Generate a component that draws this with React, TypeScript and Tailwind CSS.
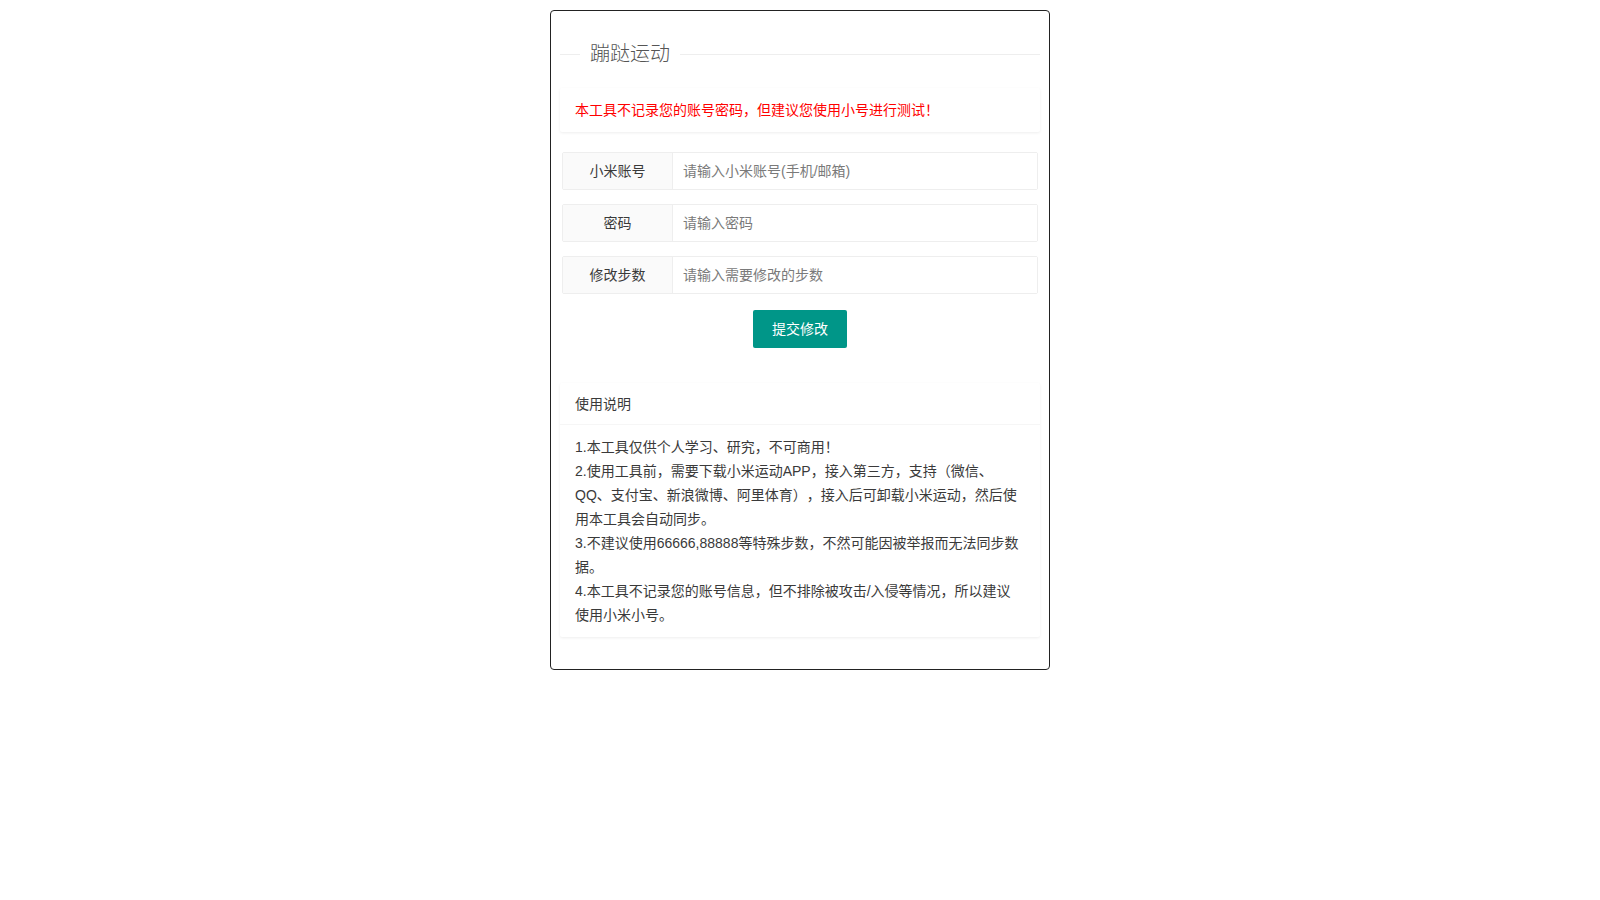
import React from "react";

const FONT = '"Liberation Sans", "Noto Sans CJK SC", sans-serif';

const fields = [
    { label: "小米账号", placeholder: "请输入小米账号(手机/邮箱)", type: "text" },
    { label: "密码", placeholder: "请输入密码", type: "password" },
    { label: "修改步数", placeholder: "请输入需要修改的步数", type: "text" },
];

const notes = [
    "1.本工具仅供个人学习、研究，不可商用！",
    "2.使用工具前，需要下载小米运动APP，接入第三方，支持（微信、QQ、支付宝、新浪微博、阿里体育），接入后可卸载小米运动，然后使用本工具会自动同步。",
    "3.不建议使用66666,88888等特殊步数，不然可能因被举报而无法同步数据。",
    "4.本工具不记录您的账号信息，但不排除被攻击/入侵等情况，所以建议使用小米小号。",
];

export default function App() {
    return (
        <div
            className="min-h-[900px] bg-white pt-[10px] flex justify-center [text-spacing-trim:space-all]"
            style={{ fontFamily: FONT }}
        >
            <div className="w-[500px] self-start border border-[#222] rounded-[4px] px-[9px] pt-[32px] pb-[32px] text-[14px] text-[#3a3a3a]">
                {/* fieldset title */}
                <div className="flex items-center h-[22px]">
                    <div className="w-[20px] h-px bg-[#eee]" />
                    <span className="px-[10px] text-[20px] leading-[22px] text-[#555] font-light">蹦跶运动</span>
                    <div className="flex-1 h-px bg-[#eee]" />
                </div>

                {/* warning card */}
                <div className="mt-[23px] bg-white rounded-[2px] shadow-[0_1px_3px_0_rgba(0,0,0,0.07)] px-[15px] py-[10px] leading-[24px] text-[#ff0000]">
                    本工具不记录您的账号密码，但建议您使用小号进行测试！
                </div>

                {/* form */}
                <div className="mt-[20px] mx-[2px] flex flex-col gap-[14px]">
                    {fields.map((f) => (
                        <div key={f.label} className="flex h-[38px] border border-[#eee] rounded-[2px]">
                            <label className="w-[110px] shrink-0 bg-[#fafafa] border-r border-[#eee] flex items-center justify-center text-[#3a3a3a]">
                                {f.label}
                            </label>
                            <input
                                type={f.type}
                                placeholder={f.placeholder}
                                className="flex-1 min-w-0 px-[10px] bg-white outline-none text-[14px] text-[#333] placeholder:text-[#7a7a7a]"
                                style={{ fontFamily: FONT }}
                            />
                        </div>
                    ))}
                </div>

                <div className="mt-[16px] flex justify-center">
                    <button
                        className="h-[38px] px-[19px] bg-[#009688] text-white rounded-[2px] text-[14px]"
                        style={{ fontFamily: FONT }}
                    >
                        提交修改
                    </button>
                </div>

                {/* usage card */}
                <div className="mt-[35px] bg-white rounded-[2px] shadow-[0_1px_3px_0_rgba(0,0,0,0.07)]">
                    <div className="h-[42px] leading-[42px] px-[15px] border-b border-[#f6f6f6]">使用说明</div>
                    <div className="pl-[15px] pr-[18px] py-[10px] leading-[24px]">
                        {notes.map((n) => (
                            <p key={n}>{n}</p>
                        ))}
                    </div>
                </div>
            </div>
        </div>
    );
}
